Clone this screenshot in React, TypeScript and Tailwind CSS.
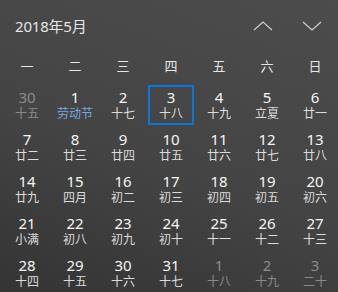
import React from "react";

type Day = { n: number; l: string; out?: boolean; holiday?: boolean; today?: boolean };

const weekdays = ["一", "二", "三", "四", "五", "六", "日"];

const days: Day[] = [
  { n: 30, l: "十五", out: true },
  { n: 1, l: "劳动节", holiday: true },
  { n: 2, l: "十七" },
  { n: 3, l: "十八", today: true },
  { n: 4, l: "十九" },
  { n: 5, l: "立夏" },
  { n: 6, l: "廿一" },
  { n: 7, l: "廿二" },
  { n: 8, l: "廿三" },
  { n: 9, l: "廿四" },
  { n: 10, l: "廿五" },
  { n: 11, l: "廿六" },
  { n: 12, l: "廿七" },
  { n: 13, l: "廿八" },
  { n: 14, l: "廿九" },
  { n: 15, l: "四月" },
  { n: 16, l: "初二" },
  { n: 17, l: "初三" },
  { n: 18, l: "初四" },
  { n: 19, l: "初五" },
  { n: 20, l: "初六" },
  { n: 21, l: "小满" },
  { n: 22, l: "初八" },
  { n: 23, l: "初九" },
  { n: 24, l: "初十" },
  { n: 25, l: "十一" },
  { n: 26, l: "十二" },
  { n: 27, l: "十三" },
  { n: 28, l: "十四" },
  { n: 29, l: "十五" },
  { n: 30, l: "十六" },
  { n: 31, l: "十七" },
  { n: 1, l: "十八", out: true },
  { n: 2, l: "十九", out: true },
  { n: 3, l: "二十", out: true },
];

function Chevron({ up }: { up?: boolean }) {
  return (
    <svg width="20" height="10" viewBox="0 0 20 10" fill="none">
      <polyline
        points={up ? "1,9 10,1 19,9" : "1,1 10,9 19,1"}
        stroke="#cfcfcf"
        strokeWidth="1.2"
      />
    </svg>
  );
}

export default function App() {
  return (
    <div
      className="w-[338px] h-[292px] overflow-hidden bg-[linear-gradient(20deg,#343434_0%,#444444_45%,#4c4c4c_100%)] text-white"
      style={{ fontFamily: '"Noto Sans", "Noto Sans CJK SC", sans-serif' }}
    >
      {/* Header */}
      <div className="h-[52px] flex items-center justify-between pl-[15px] pr-[15px]">
        <span className="text-[15px] text-[#e6e6e6] tracking-[-0.2px]">2018年5月</span>
        <div className="flex items-center gap-[29px] pr-[1px]">
          <Chevron up />
          <Chevron />
        </div>
      </div>

      {/* Weekdays */}
      <div className="grid grid-cols-[repeat(7,46px)] gap-x-[2px] px-[4px] h-[29px] items-center">
        {weekdays.map((w) => (
          <div key={w} className="text-center text-[13px] text-[#e6e6e6]">
            {w}
          </div>
        ))}
      </div>

      {/* Days */}
      <div className="grid grid-cols-[repeat(7,46px)] auto-rows-[40px] gap-x-[2px] gap-y-[2px] px-[4px] pt-[4px]">
        {days.map((d, i) => (
          <div
            key={i}
            className={`flex flex-col items-center pt-[2px] ${
              d.today ? "border-2 border-[#0a78d7]" : "border-2 border-transparent"
            }`}
          >
            <div
              className={`text-[15px] leading-[17px] ${d.out ? "text-[#8c8c8c]" : "text-[#f5f5f5]"}`}
            >
              {d.n}
            </div>
            <div
              className={`mt-[1px] text-[12px] leading-[14px] ${
                d.out ? "text-[#8a8a8a]" : d.holiday ? "text-[#76a9dd]" : "text-[#dcdcdc]"
              }`}
            >
              {d.l}
            </div>
          </div>
        ))}
      </div>
    </div>
  );
}
